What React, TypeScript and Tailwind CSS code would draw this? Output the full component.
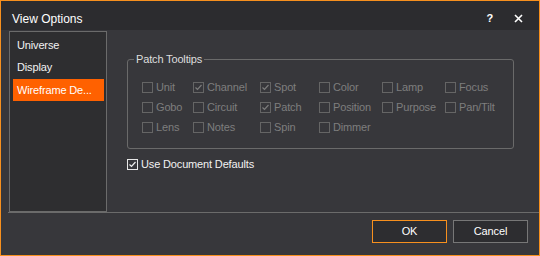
import React from "react";

type Opt = { label: string; checked?: boolean };

const tooltips: Opt[] = [
  { label: "Unit" },
  { label: "Channel", checked: true },
  { label: "Spot", checked: true },
  { label: "Color" },
  { label: "Lamp" },
  { label: "Focus" },
  { label: "Gobo" },
  { label: "Circuit" },
  { label: "Patch", checked: true },
  { label: "Position" },
  { label: "Purpose" },
  { label: "Pan/Tilt" },
  { label: "Lens" },
  { label: "Notes" },
  { label: "Spin" },
  { label: "Dimmer" },
];

const Check = ({ checked, enabled }: { checked?: boolean; enabled?: boolean }) => (
  <span
    className={
      enabled
        ? "w-[11px] h-[11px] border border-[#e8e8e8] flex items-center justify-center shrink-0"
        : "w-[11px] h-[11px] border border-[#656565] flex items-center justify-center shrink-0"
    }
  >
    {checked && (
      <svg width="9" height="9" viewBox="0 0 9 9">
        <polyline
          points="1.5,4.5 3.5,6.5 7.5,2"
          fill="none"
          stroke={enabled ? "#f0f0f0" : "#7c7c7c"}
          strokeWidth="1.2"
        />
      </svg>
    )}
  </span>
);

export default function App() {
  return (
    <div className="w-[540px] h-[256px] border border-[#f7901e] bg-[#37373b] flex flex-col text-[11px] tracking-[-0.15px] font-['Liberation_Sans',Arial,sans-serif] overflow-hidden">
      {/* title bar */}
      <div className="h-[29px] shrink-0 bg-[#2c2c2f] flex items-center pt-[6px] pl-[11px] pr-[16px] text-white">
        <span className="text-[12px] tracking-normal">View Options</span>
        <div className="ml-auto flex items-center gap-[21px]">
          <span className="text-[11px] font-bold">?</span>
          <svg width="9" height="9" viewBox="0 0 9 9">
            <path d="M1 1 L8 8 M8 1 L1 8" stroke="#ffffff" strokeWidth="1.6" />
          </svg>
        </div>
      </div>

      {/* body */}
      <div className="h-[182px] shrink-0 flex pl-[8px]">
        <div className="mt-[1px] w-[98px] h-[181px] border border-[#6b6b6b] bg-[#2e2e30] pt-[2px] pl-[3px] pr-[2px] text-[#f2f2f2]">
          <div className="h-[22px] flex items-center pl-[4px]">Universe</div>
          <div className="h-[22px] flex items-center pl-[4px]">Display</div>
          <div className="mt-[1px] h-[22px] flex items-center pl-[4px] bg-[#ff6100] text-white">Wireframe De...</div>
        </div>

        <div className="ml-[20px] flex flex-col">
          <fieldset className="mt-[22px] w-[387px] border border-[#6a6a6a] rounded-[3px] pl-[14px] pt-[11px] pb-[11px]">
            <legend className="-ml-[8px] px-[2px] text-[#dedede] leading-[14px]">Patch Tooltips</legend>
            <div className="grid grid-cols-[51px_67px_59px_63px_63px_60px] auto-rows-[20px] text-[#7e7e7e]">
              {tooltips.map((t) => (
                <div key={t.label} className="flex items-center gap-[3px]">
                  <Check checked={t.checked} />
                  <span>{t.label}</span>
                </div>
              ))}
            </div>
          </fieldset>

          <div className="mt-[5px] h-[20px] flex items-center gap-[3px] text-[#f2f2f2]">
            <Check checked enabled />
            <span>Use Document Defaults</span>
          </div>
        </div>
      </div>

      {/* separator */}
      <div className="h-px shrink-0 ml-[7px] bg-[#6b6b6b]" />

      {/* buttons */}
      <div className="flex justify-end gap-[6px] pt-[7px] pr-[11px] text-white">
        <button className="w-[75px] h-[23px] border border-[#f7901e] bg-[#2d2d30]">OK</button>
        <button className="w-[75px] h-[23px] border border-[#777777] bg-[#2d2d30]">Cancel</button>
      </div>
    </div>
  );
}
